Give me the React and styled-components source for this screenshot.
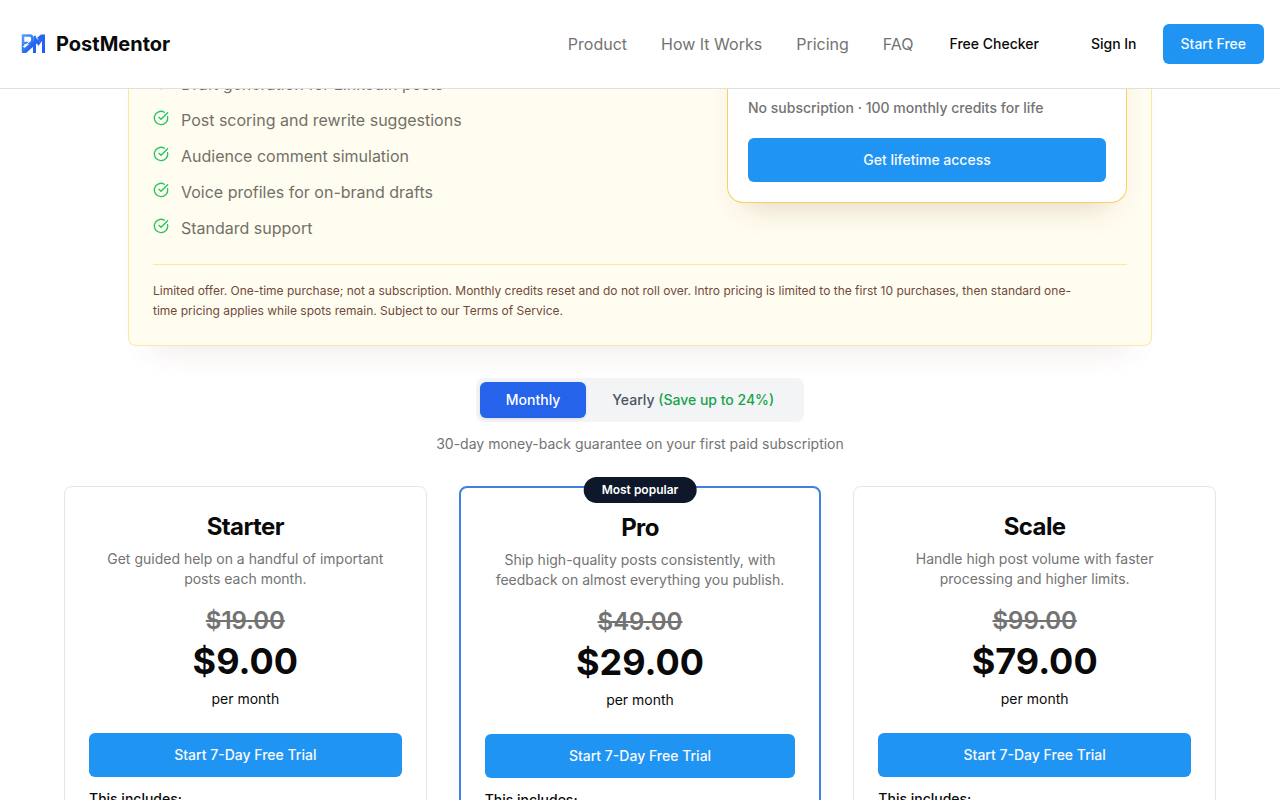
import React, { useState } from "react";
import styled, { createGlobalStyle } from "styled-components";
import { CircleCheckBig } from "lucide-react";

const GlobalStyle = createGlobalStyle`
  * {
    box-sizing: border-box;
  }

  html {
    height: 100%;
  }

  body {
    height: 100%;
    margin: 0;
    overflow: hidden;
    background-color: #fff;
    color: #0a0a0a;
    font-family: "Inter", "Liberation Sans", sans-serif;
    font-size: 16px;
    line-height: 24px;
  }

  h3,
  p,
  ul {
    margin: 0;
    padding: 0;
  }

  button {
    font-family: inherit;
  }
`;

const Header = styled.header`
  position: fixed;
  top: 0;
  left: 0;
  right: 0;
  z-index: 10;
  display: flex;
  align-items: center;
  justify-content: space-between;
  padding: 24px 16px;
  background-color: #fff;
  border-bottom: 1px solid #e0e0e0;
`;

const Brand = styled.a`
  display: flex;
  align-items: center;
  gap: 6px;
  color: #0a0a0a;
  font-size: 20px;
  font-weight: 700;
  line-height: 28px;
  text-decoration: none;
`;

const Nav = styled.nav`
  display: flex;
  align-items: center;
  gap: 34px;
`;

const NavLink = styled.a`
  color: #737373;
  text-decoration: none;
`;

const NavActions = styled.div`
  display: flex;
  align-items: center;
  gap: 8px;
  margin-left: -16px;
`;

const Button = styled.button`
  width: ${(props) => (props.$full ? "100%" : "auto")};
  height: ${(props) => (props.$full ? "44px" : "40px")};
  padding: 0 16px;
  border: none;
  border-radius: 6px;
  background-color: ${(props) => (props.$ghost ? "transparent" : "#2094f3")};
  color: ${(props) => (props.$ghost ? "#0a0a0a" : "#f8fafc")};
  font-size: 14px;
  font-weight: 500;
  line-height: 20px;
  cursor: pointer;
`;

const NavButton = styled(Button)`
  min-width: 80px;
  margin-right: ${(props) => (props.$spaced ? "8px" : "0")};
  padding: 0 18px;
`;

const Main = styled.main`
  padding: 0 64px;
`;

const Offer = styled.section`
  max-width: 1024px;
  margin: 0 auto;
  padding: 0 24px 24px;
  border: 1px solid #fbe6a2;
  border-top: none;
  border-radius: 0 0 8px 8px;
  background-color: #fffdf0;
  box-shadow: 0 26px 30px -24px rgba(127, 50, 30, 0.12);
`;

const OfferBody = styled.div`
  display: grid;
  grid-template-columns: 1fr 400px;
  align-items: start;
`;

const FeatureList = styled.ul`
  display: flex;
  flex-direction: column;
  gap: 12px;
  padding-top: 72px;
  list-style: none;
`;

const Feature = styled.li`
  display: flex;
  align-items: flex-start;
  gap: 12px;
  color: #737068;

  svg {
    flex-shrink: 0;
    margin-top: 2px;
    color: #22c55e;
  }
`;

const DealCard = styled.div`
  display: flex;
  flex-direction: column;
  gap: 20px;
  padding: 98px 20px 20px;
  border: 1px solid #f8d060;
  border-top: none;
  border-radius: 0 0 16px 16px;
  background-color: #fff;
  box-shadow: 0 18px 30px -18px rgba(120, 53, 15, 0.25);
`;

const DealText = styled.p`
  color: #737373;
  font-size: 14px;
  font-weight: 500;
  line-height: 20px;
`;

const FinePrint = styled.p`
  margin-top: 24px;
  padding: 16px 40px 0 0;
  border-top: 1px solid #fbe6a2;
  color: #704a3c;
  font-size: 12px;
  line-height: 20px;
`;

const Billing = styled.div`
  display: flex;
  flex-direction: column;
  align-items: center;
  gap: 12px;
  margin: 32px 0;
`;

const Toggle = styled.div`
  display: flex;
  padding: 4px;
  border-radius: 8px;
  background-color: #f3f4f6;
`;

const ToggleButton = styled.button`
  padding: 8px 26px;
  border: none;
  border-radius: 6px;
  background-color: ${(props) => (props.$active ? "#2563eb" : "transparent")};
  box-shadow: ${(props) =>
    props.$active ? "0 1px 3px rgba(0, 0, 0, 0.1)" : "none"};
  color: ${(props) => (props.$active ? "#fff" : "#4b5563")};
  font-size: 14px;
  font-weight: 500;
  line-height: 20px;
  cursor: pointer;
`;

const Saving = styled.span`
  color: #16a34a;
`;

const Guarantee = styled.p`
  color: #737373;
  font-size: 14px;
  line-height: 20px;
`;

const Plans = styled.div`
  display: grid;
  grid-template-columns: repeat(3, 1fr);
  gap: 32px;
  max-width: 1152px;
  margin: 0 auto;
`;

const PlanCard = styled.article`
  position: relative;
  display: flex;
  flex-direction: column;
  padding: 24px;
  border: ${(props) =>
    props.$popular ? "2px solid #3f80e0" : "1px solid #e5e5e5"};
  border-radius: 8px;
  background-color: #fff;
  box-shadow: ${(props) =>
    props.$popular ? "0 10px 20px rgba(0, 0, 0, 0.04)" : "none"};
  text-align: center;
`;

const Badge = styled.span`
  position: absolute;
  top: -11px;
  left: 50%;
  transform: translateX(-50%);
  padding: 5px 18px;
  border-radius: 13px;
  background-color: #0f172a;
  color: #fff;
  font-size: 12px;
  font-weight: 600;
  line-height: 16px;
  white-space: nowrap;
`;

const PlanName = styled.h3`
  font-size: 24px;
  font-weight: 700;
  line-height: 32px;
  letter-spacing: -0.025em;
`;

const PlanText = styled.p`
  margin-top: 6px;
  padding: 0 8px;
  color: #737373;
  font-size: 14px;
  line-height: 20px;
`;

const OldPrice = styled.s`
  margin-top: 16px;
  color: #737373;
  font-size: 24px;
  font-weight: 600;
  line-height: 32px;
`;

const Price = styled.strong`
  margin-top: 4px;
  font-size: 36px;
  font-weight: 700;
  line-height: 40px;
`;

const Period = styled.p`
  margin: 8px 0 24px;
  font-size: 14px;
  line-height: 20px;
`;

const Includes = styled.p`
  margin-top: 12px;
  font-size: 14px;
  font-weight: 500;
  line-height: 20px;
  text-align: left;
`;

const navLinks = ["Product", "How It Works", "Pricing", "FAQ"];

const features = [
  "Draft generation for LinkedIn posts",
  "Post scoring and rewrite suggestions",
  "Audience comment simulation",
  "Voice profiles for on-brand drafts",
  "Standard support",
];

const plans = [
  {
    name: "Starter",
    text: "Get guided help on a handful of important posts each month.",
    oldPrice: "$19.00",
    price: "$9.00",
  },
  {
    name: "Pro",
    text: "Ship high-quality posts consistently, with feedback on almost everything you publish.",
    oldPrice: "$49.00",
    price: "$29.00",
    popular: true,
  },
  {
    name: "Scale",
    text: "Handle high post volume with faster processing and higher limits.",
    oldPrice: "$99.00",
    price: "$79.00",
  },
];

function Logo() {
  return (
    <svg width="34" height="28" viewBox="0 0 34 28" fill="none" aria-hidden="true">
      <defs>
        <linearGradient id="brand" x1="6" y1="4" x2="29" y2="24" gradientUnits="userSpaceOnUse">
          <stop stopColor="#5aa6fb" />
          <stop offset="0.5" stopColor="#2468f0" />
          <stop offset="1" stopColor="#1f5cf0" />
        </linearGradient>
      </defs>
      <g stroke="url(#brand)" strokeWidth="2">
        <path d="M7 22V5.5H13.5C17.5 5.5 17.5 12.5 13.5 13H7" strokeWidth="2.5" />
        <path d="M18.5 23V6L22.5 14L27 8" />
        <path d="M27.5 23V5" strokeWidth="3" />
        <path d="M18.5 23V11" strokeWidth="3" />
      </g>
      <path d="M6 23V20L25 4.5H29V6L22 12.5L10 23Z" fill="url(#brand)" />
      <path d="M7 17L15 10.5M20.5 7.5L22 9.5" stroke="#fff" strokeWidth="1" />
    </svg>
  );
}

function Plan({ plan }) {
  return (
    <PlanCard $popular={plan.popular}>
      {plan.popular && <Badge>Most popular</Badge>}
      <PlanName>{plan.name}</PlanName>
      <PlanText>{plan.text}</PlanText>
      <OldPrice>{plan.oldPrice}</OldPrice>
      <Price>{plan.price}</Price>
      <Period>per month</Period>
      <Button type="button" $full>
        Start 7-Day Free Trial
      </Button>
      <Includes>This includes:</Includes>
    </PlanCard>
  );
}

function App() {
  const [billing, setBilling] = useState("monthly");

  return (
    <>
      <GlobalStyle />
      <Header>
        <Brand href="#">
          <Logo />
          PostMentor
        </Brand>
        <Nav>
          {navLinks.map((label) => (
            <NavLink key={label} href="#">
              {label}
            </NavLink>
          ))}
          <NavActions>
            <NavButton type="button" $ghost $spaced>
              Free Checker
            </NavButton>
            <NavButton type="button" $ghost>
              Sign In
            </NavButton>
            <NavButton type="button">Start Free</NavButton>
          </NavActions>
        </Nav>
      </Header>
      <Main>
        <Offer>
          <OfferBody>
            <FeatureList>
              {features.map((feature) => (
                <Feature key={feature}>
                  <CircleCheckBig size={16} />
                  {feature}
                </Feature>
              ))}
            </FeatureList>
            <DealCard>
              <DealText>No subscription · 100 monthly credits for life</DealText>
              <Button type="button" $full>
                Get lifetime access
              </Button>
            </DealCard>
          </OfferBody>
          <FinePrint>
            Limited offer. One-time purchase; not a subscription. Monthly credits
            reset and do not roll over. Intro pricing is limited to the first 10
            purchases, then standard one-time pricing applies while spots remain.
            Subject to our Terms of Service.
          </FinePrint>
        </Offer>
        <Billing>
          <Toggle>
            <ToggleButton
              type="button"
              $active={billing === "monthly"}
              onClick={() => setBilling("monthly")}
            >
              Monthly
            </ToggleButton>
            <ToggleButton
              type="button"
              $active={billing === "yearly"}
              onClick={() => setBilling("yearly")}
            >
              Yearly <Saving>(Save up to 24%)</Saving>
            </ToggleButton>
          </Toggle>
          <Guarantee>
            30-day money-back guarantee on your first paid subscription
          </Guarantee>
        </Billing>
        <Plans>
          {plans.map((plan) => (
            <Plan key={plan.name} plan={plan} />
          ))}
        </Plans>
      </Main>
    </>
  );
}

export default App;
